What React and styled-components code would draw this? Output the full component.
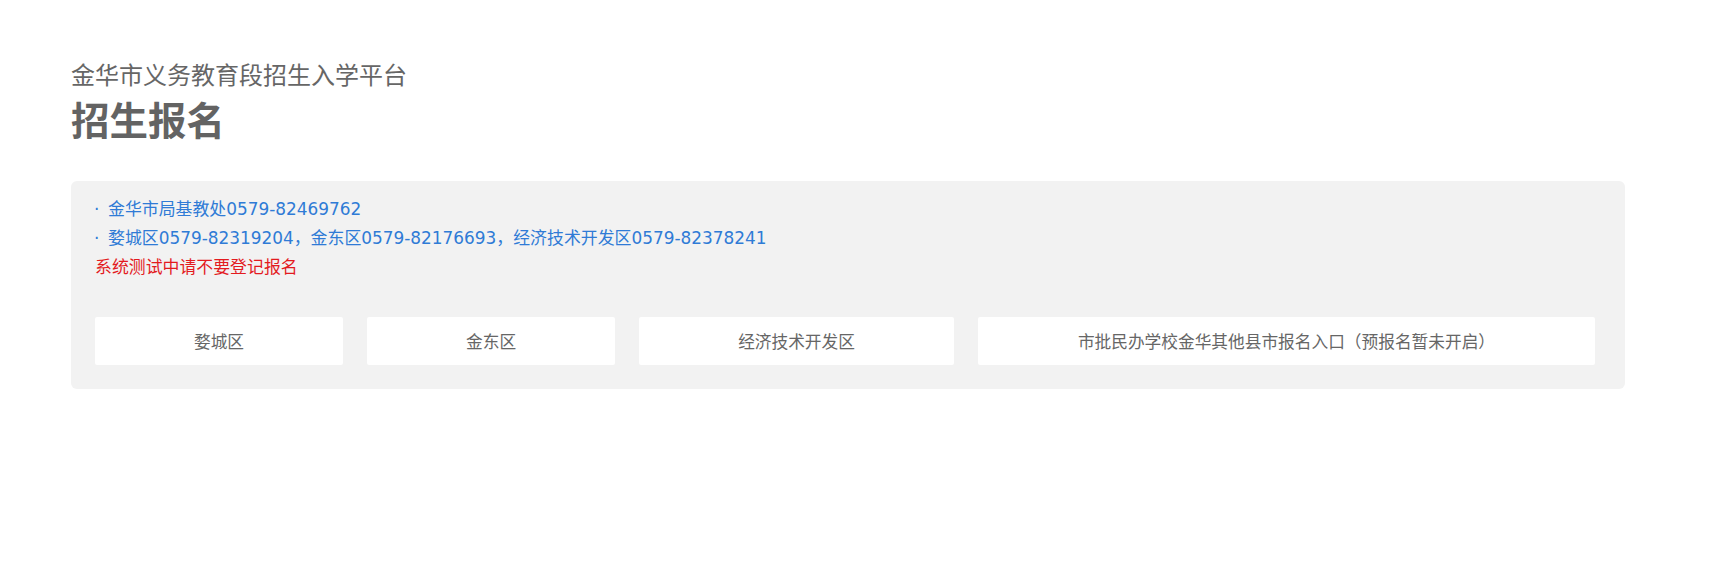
import React from "react";
import styled, { createGlobalStyle } from "styled-components";

const Global = createGlobalStyle`
  html, body { margin: 0; padding: 0; background: #ffffff; }
  body { font-family: "DejaVu Sans", "Noto Sans CJK SC", sans-serif; }
`;

const Page = styled.div`
  width: 1554px;
  padding: 58px 86px 0 71px;
`;

const Header = styled.header`
  display: flex;
  flex-direction: column;
  gap: 2px;
`;

const Subtitle = styled.div`
  font-family: "Noto Sans CJK SC", sans-serif;
  font-size: 24px;
  line-height: 32px;
  color: #666666;
`;

const Title = styled.h1`
  margin: 0;
  font-family: "Noto Sans CJK SC", sans-serif;
  font-size: 38.5px;
  line-height: 52px;
  font-weight: 700;
  color: #636363;
`;

const Panel = styled.section`
  margin-top: 37px;
  background: #f2f2f2;
  border-radius: 6px;
  padding: 14px 30px 24px 24px;
`;

const Notice = styled.div`
  display: flex;
  flex-direction: column;
`;

const Line = styled.div`
  font-family: "DejaVu Sans", "Noto Sans CJK SC", sans-serif;
  font-size: 16.9px;
  line-height: 29px;
  color: ${(p) => (p.$warn ? "#e31b1f" : "#2f7bd6")};
  white-space: nowrap;
`;

const Dot = styled.span`
  display: inline-block;
  width: 14px;
  margin-left: -10px;
  padding-left: 9px;
`;

const Entries = styled.nav`
  margin-top: 35px;
  display: flex;
  gap: 24px;
`;

const Entry = styled.a`
  flex: ${(p) => (p.$grow ? "1 1 auto" : "0 0 auto")};
  display: flex;
  align-items: center;
  justify-content: center;
  height: 48px;
  padding: 0 99px;
  background: #ffffff;
  border-radius: 2px;
  font-family: "Noto Sans CJK SC", sans-serif;
  font-size: 16.7px;
  color: #666666;
  text-decoration: none;
  cursor: pointer;
  white-space: nowrap;
`;

const entries = [
  "婺城区",
  "金东区",
  "经济技术开发区",
  "市批民办学校金华其他县市报名入口（预报名暂未开启）",
];

export default function App() {
  return (
    <>
      <Global />
      <Page>
        <Header>
          <Subtitle>金华市义务教育段招生入学平台</Subtitle>
          <Title>招生报名</Title>
        </Header>
        <Panel>
          <Notice>
            <Line>
              <Dot>·</Dot>金华市局基教处0579-82469762
            </Line>
            <Line>
              <Dot>·</Dot>婺城区0579-82319204，金东区0579-82176693，经济技术开发区0579-82378241
            </Line>
            <Line $warn>系统测试中请不要登记报名</Line>
          </Notice>
          <Entries>
            {entries.map((e, i) => (
              <Entry key={e} $grow={i === entries.length - 1}>
                {e}
              </Entry>
            ))}
          </Entries>
        </Panel>
      </Page>
    </>
  );
}
